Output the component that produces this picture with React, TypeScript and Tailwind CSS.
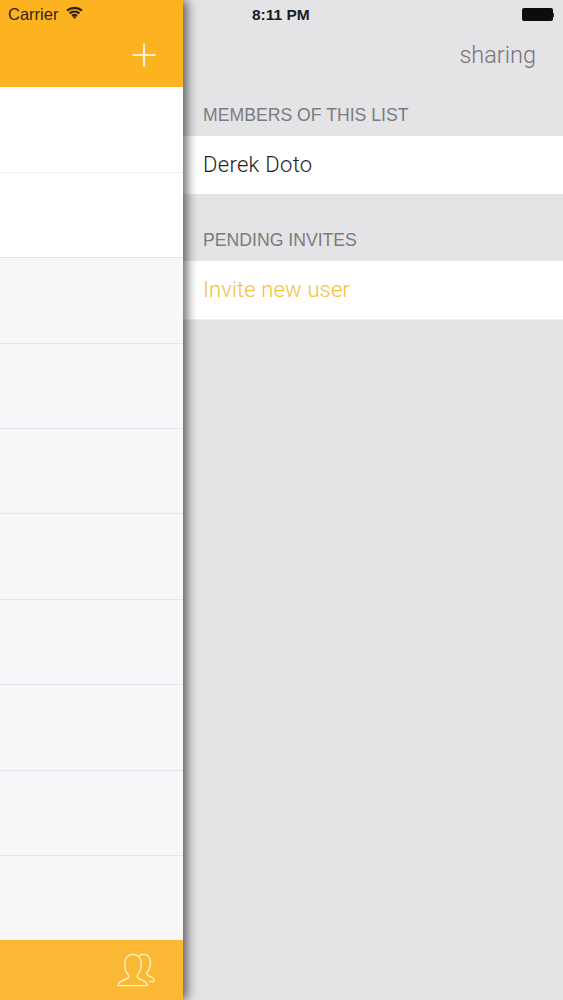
import React from "react";

const rowsClass = "h-[85.4px] border-b border-[#e4e3e7]";

function Wifi() {
  return (
    <svg width="17" height="13" viewBox="0 0 17 13" fill="none" stroke="#2e2109" strokeWidth="2.200">
      <path d="M1 4.600C5.200.9 11.800.9 16 4.600" />
      <path d="M3.600 7.300c2.800-2.400 7-2.400 9.800 0" />
      <path d="M6 9.800c1.400-1.100 3.600-1.100 5 0" />
      <path d="M8.500 12.600l-1.500-1.700c.9-.5 2.100-.5 3 0z" fill="#2e2109" strokeWidth="0.5" />
    </svg>
  );
}

function Users() {
  return (
    <svg width="40" height="36" viewBox="0 0 40 36" fill="none" stroke="#fff3c4" strokeWidth="1.400" strokeLinejoin="round" strokeLinecap="round">
      <path d="M1 34.600c0-3 2.400-4.200 6-5.600 3-1.200 4.800-2 4.800-3.600 0-1.600-2-3.200-3-5.600C7.800 17.600 7.400 14.600 7.800 11.600 8.400 6.400 11.400 3.400 16 3.400s7.600 3 8.200 8.200c.4 3-.2 6-1.200 8.200-1 2.400-2.800 4-2.800 5.600 0 1.600 1.800 2.400 4.800 3.600 3 1.200 5.200 2.600 5.200 5.600z" />
      <path d="M23 4.400c1-.7 2.100-1 3.300-1 4 0 6.500 2.600 7 7 .4 3-.1 5.600-1.100 7.600-.9 1.900-2.400 3.400-2.400 4.800 0 1.400 1.500 2.100 4.100 3.100 1.200.5 2.100 1.100 2.600 1.800.5.700.6 2.900.6 2.900h-4.500" />
    </svg>
  );
}

export default function App() {
  return (
    <div className="flex w-[563px] h-[1000px] overflow-hidden bg-[#e4e3e6] font-['Roboto','Liberation_Sans',sans-serif]">
      <aside className="relative z-10 flex h-full w-[183px] shrink-0 flex-col bg-[#f8f6f9] shadow-[4px_0_10px_rgba(0,0,0,0.6)]">
        <header className="h-[87px] shrink-0 bg-[#fdb21f] pl-2">
          <div className="flex h-[29px] items-center gap-[8px]">
            <span className="text-[16.500px] leading-none text-[#33250c] font-['Liberation_Sans',sans-serif]">Carrier</span>
            <span className="-mt-[4px] flex"><Wifi /></span>
          </div>
          <div className="flex h-[52px] items-center justify-end pr-[27px]">
            <svg width="24" height="24" viewBox="0 0 24 24" stroke="#fff3d6" strokeWidth="2.200">
              <path d="M12 0.500V23.500M0.500 12H23.500" />
            </svg>
          </div>
        </header>
        <div className="flex-1">
          <div className="h-[85.800px] border-b border-[#f1f0f3] bg-white" />
          <div className={`${rowsClass} bg-white`} />
          <div className={rowsClass} />
          <div className={rowsClass} />
          <div className={rowsClass} />
          <div className={rowsClass} />
          <div className={rowsClass} />
          <div className={rowsClass} />
          <div className={rowsClass} />
        </div>
        <footer className="flex h-[60.500px] shrink-0 items-center justify-end bg-[#fbb834] pb-[2px] pr-[26px]">
          <Users />
        </footer>
      </aside>

      <main className="flex min-w-0 flex-1 flex-col">
        <div className="flex h-[29px] items-center pl-[69px] pr-[9px]">
          <span className="text-[15.500px] font-bold leading-none text-[#1c1c1e] font-['Liberation_Sans',sans-serif]">8:11 PM</span>
          <span className="ml-auto flex items-center">
            <span className="h-[13px] w-[31px] rounded-[2px] bg-[#0c0c0e]" />
            <span className="h-[4px] w-[1.500px] bg-[#3a3a3c]" />
          </span>
        </div>
        <div className="flex h-[50px] items-center justify-end pr-[27px] pt-[4px]">
          <span className="text-[23.500px] font-light leading-none text-[#77767a]">sharing</span>
        </div>
        <p className="flex h-[57px] items-center pl-[20px] pt-[16px] font-['Liberation_Sans',sans-serif] text-[17.650px] leading-none text-[#7c7b7f]">MEMBERS OF THIS LIST</p>
        <div className="flex h-[58px] items-center bg-white pl-[20px] text-[22px] font-light leading-none tracking-[0.3px] text-[#232327]">Derek Doto</div>
        <p className="flex h-[67px] items-end pb-[11px] pl-[20px] font-['Liberation_Sans',sans-serif] text-[17.650px] leading-none text-[#7c7b7f]">PENDING INVITES</p>
        <div className="flex h-[58.500px] items-center border-b border-[#eeedf0] bg-white pl-[20px] text-[22px] font-light leading-none tracking-[0.15px] text-[#f2bf3c]">Invite new user</div>
      </main>
    </div>
  );
}
